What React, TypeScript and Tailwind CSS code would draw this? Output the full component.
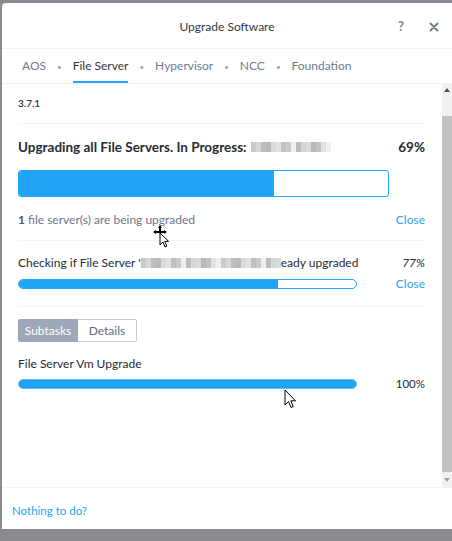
import React from "react";

const font = { fontFamily: "Lato, 'Open Sans', sans-serif" };

function Blur({ w }: { w: number }) {
  const shades = ["#c9c9c9", "#e2e2e2", "#b9b9b9", "#d6d6d6", "#efefef", "#c2c2c2", "#dadada", "#bdbdbd"];
  const cells = Math.round(w / 5);
  return (
    <span className="inline-flex h-[10px] align-middle">
      {Array.from({ length: cells }).map((_, i) => (
        <span key={i} className="w-[5px] h-full" style={{ background: shades[(i * 3 + (i >> 1)) % shades.length] }} />
      ))}
    </span>
  );
}

function ArrowCursor() {
  return (
    <svg width="13" height="20" viewBox="0 0 13 20">
      <path d="M1 1 L1 16 L4.5 12.5 L7 18.5 L9.2 17.6 L6.8 11.8 L11.5 11.8 Z" fill="white" stroke="black" strokeWidth="1" />
    </svg>
  );
}

function MoveCursor() {
  return (
    <svg width="20" height="24" viewBox="0 0 20 24">
      <path d="M7 1 L9 4 H8 V7 H11 V6 L14 8 L11 10 V9 H8 V9 H6 V9 H3 V10 L0 8 L3 6 V7 H6 V4 H5 Z" fill="black" />
      <path d="M7 9 L7 21 L10 18 L12 23 L13.8 22.2 L11.8 17.4 L15.6 17.4 Z" fill="white" stroke="black" strokeWidth="1" />
    </svg>
  );
}

export default function App() {
  const blue = "#22a5f6";
  return (
    <div className="w-[452px] h-[541px] bg-[#8a8a90] pt-[3px] pl-[2px] pb-[12px] flex flex-col overflow-hidden" style={font}>
      <div className="flex-1 bg-white rounded-tl-[4px] flex flex-col min-h-0 relative">
        {/* header */}
        <div className="h-[46px] grid grid-cols-[1fr_auto_1fr] items-center border-b border-[#f2f2f2]">
          <div />
          <div className="text-[12px] text-[#333a44] pt-[3px]">Upgrade Software</div>
          <div className="flex justify-end items-center pr-[13px] gap-[25px] text-[#7a8494] pt-[3px]">
            <span className="text-[13px] font-bold">?</span>
            <svg width="10" height="10" viewBox="0 0 10 10">
              <path d="M1.5 1.5 L8.5 8.5 M8.5 1.5 L1.5 8.5" stroke="#6f7a8a" strokeWidth="1.8" strokeLinecap="round" />
            </svg>
          </div>
        </div>
        {/* tabs */}
        <div className="h-[35px] flex items-stretch pl-[20px] border-b border-[#f2f2f2] text-[12px]">
          {["AOS", "File Server", "Hypervisor", "NCC", "Foundation"].map((t, i) => (
            <div key={t} className="flex items-stretch">
              {i > 0 && <span className="flex items-center px-[11px] text-[#9aa3b0] text-[8px] pt-[1px]">•</span>}
              <span
                className={
                  "flex items-center border-b-2 pt-[1px] " +
                  (t === "File Server" ? "border-[#22a5f6] text-[#2f3640]" : "border-transparent text-[#6d7b90]")
                }
              >
                {t}
              </span>
            </div>
          ))}
        </div>
        {/* content */}
        <div className="flex-1 flex min-h-0">
          <div className="flex-1 flex flex-col pl-[16px] pr-[17px]">
            <div className="h-[40px] flex items-center border-b border-[#f3f3f3] text-[10px] text-[#333] font-semibold">3.7.1</div>
            {/* section 1 */}
            <div className="h-[117px] border-b border-[#f3f3f3] flex flex-col pt-[15px]">
              <div className="flex items-center justify-between h-[16px] text-[13.5px] font-bold text-[#262b33]">
                <span className="flex items-center gap-[4px]">
                  Upgrading all File Servers. In Progress: <Blur w={80} />
                </span>
                <span>69%</span>
              </div>
              <div className="mt-[15px] w-[371px] h-[27px] rounded-[3px] border-[1.5px] border-[#22a5f6] bg-white overflow-hidden">
                <div className="h-full bg-[#22a5f6]" style={{ width: "69%" }} />
              </div>
              <div className="mt-[14px] flex items-center justify-between text-[12px]">
                <span className="text-[#6b7688]">
                  <span className="font-bold text-[#4b5566]">1</span> file server(s) are being upgraded
                </span>
                <span className="text-[#22a5f6]">Close</span>
              </div>
            </div>
            {/* section 2 */}
            <div className="h-[66px] border-b border-[#f3f3f3] flex flex-col pt-[15px]">
              <div className="flex items-center justify-between h-[14px] text-[12px] text-[#262b33]">
                <span className="flex items-center">
                  Checking if File Server '<Blur w={140} />eady upgraded
                </span>
                <span className="italic">77%</span>
              </div>
              <div className="mt-[5px] flex items-center justify-between">
                <div className="w-[339px] h-[10px] rounded-full border border-[#22a5f6] bg-white overflow-hidden">
                  <div className="h-full bg-[#22a5f6]" style={{ width: "77%" }} />
                </div>
                <span className="text-[12px] text-[#22a5f6]">Close</span>
              </div>
            </div>
            {/* section 3 */}
            <div className="flex flex-col pt-[12px]">
              <div className="flex h-[23px] w-[119px] text-[12px]">
                <span className="flex-1 flex items-center justify-center bg-[#9ea7b7] text-white rounded-l-[2px] border border-[#9ea7b7]">Subtasks</span>
                <span className="flex-1 flex items-center justify-center bg-white text-[#5d6a7e] border border-[#c3c9d3] border-l-0 rounded-r-[2px]">Details</span>
              </div>
              <div className="mt-[15px] h-[14px] flex items-center text-[12px] text-[#262b33]">File Server Vm Upgrade</div>
              <div className="mt-[4px] flex items-center justify-between">
                <div className="w-[339px] h-[10px] rounded-full bg-[#22a5f6] border border-[#5bbcf8]" />
                <span className="text-[11.5px] text-[#262b33]">100%</span>
              </div>
            </div>
          </div>
          {/* scrollbar */}
          <div className="w-[10px] bg-[#f1f1f1] flex flex-col items-center">
            <div className="h-[32px] flex items-start pt-[4px]">
              <svg width="6" height="4" viewBox="0 0 6 4"><path d="M0 4 L3 0 L6 4 Z" fill="#505050" /></svg>
            </div>
            <div className="flex-1 w-full bg-[#c1c1c1]" />
            <div className="h-[15px] flex items-center">
              <svg width="6" height="4" viewBox="0 0 6 4"><path d="M0 0 L3 4 L6 0 Z" fill="#a0a0a0" /></svg>
            </div>
          </div>
        </div>
        {/* footer */}
        <div className="h-[42px] border-t border-[#f3f3f3] flex items-center pl-[10px] pt-[5px] text-[11.5px]" style={{ color: blue }}>
          Nothing to do?
        </div>
        <div className="absolute left-[151px] top-[221px]"><MoveCursor /></div>
        <div className="absolute left-[282px] top-[386px]"><ArrowCursor /></div>
      </div>
    </div>
  );
}
